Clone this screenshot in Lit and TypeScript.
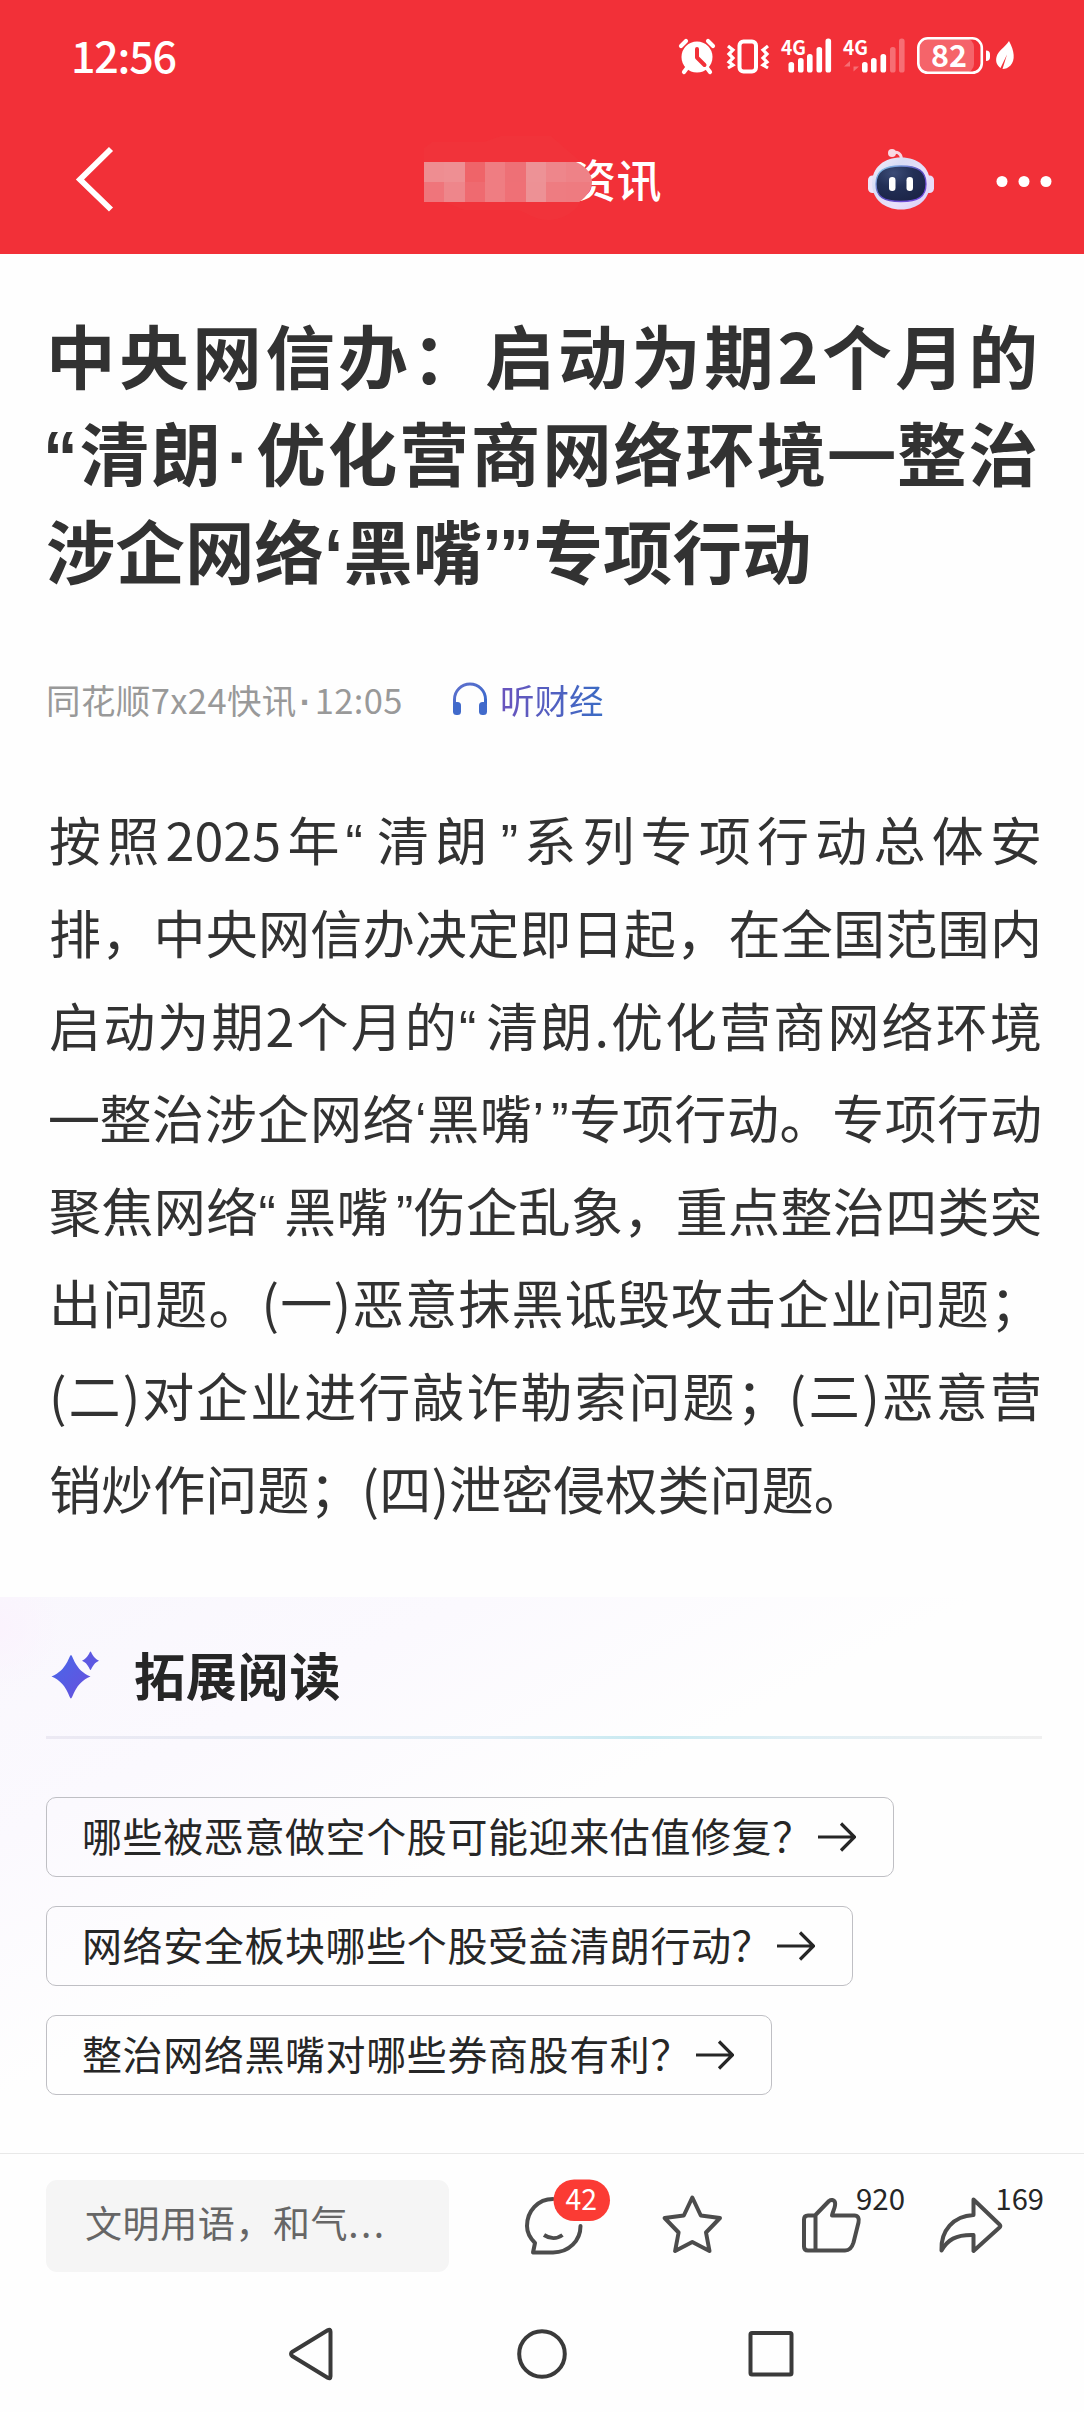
import { LitElement, html, css, svg } from "lit";
import { customElement } from "lit/decorators.js";
import { classMap } from "lit/directives/class-map.js";

const FONT = css`"Noto Sans CJK SC", "Noto Sans", sans-serif`;

@customElement("status-bar")
class StatusBar extends LitElement {
  static styles = css`
    :host { display: block; height: 110px; color: #fff; }
    .bar { display: flex; justify-content: space-between; height: 100%; padding: 0 64px 0 71px; box-sizing: border-box; }
    .time { font: 500 43px/112px "Noto Sans CJK SC", sans-serif; letter-spacing: -1.2px; margin-top: -2px; }
    .icons { width: 350px; height: 50px; margin-top: 30px; display: block; }
    .net { font: 700 20px "Noto Sans CJK SC", sans-serif; }
    .charge { font: 700 31px "Noto Sans CJK SC", sans-serif; }
  `;
  render() {
    const bars = (xs: number[], tops: number[], dim: number) =>
      xs.map((x, i) => svg`<rect x=${x} y=${tops[i]} width="5.6" height=${72.5 - tops[i]} rx="2.6" opacity=${i >= dim ? 0.3 : 1}></rect>`);
    return html`<div class="bar">
      <div class="time">12:56</div>
      <svg class="icons" viewBox="670 30 350 50" fill="#fff">
        <circle cx="697" cy="57" r="15.5"></circle>
        <g stroke="#fff" stroke-width="4.2" stroke-linecap="round" fill="none">
          <path d="M681 46l5-5M713 46l-5-5M687 68l-3 4M707 68l3 4"></path>
        </g>
        <path d="M697 49v8.5l7.5 7.5" fill="none" stroke="#f23038" stroke-width="4" stroke-linecap="round" stroke-linejoin="round"></path>
        <rect x="739.5" y="41.5" width="16.5" height="30" rx="4" fill="none" stroke="#fff" stroke-width="4"></rect>
        <path d="M728 46l5 4-4 4 4 4-4 4 4 3-5 3M768 46l-5 4 4 4-4 4 4 4-4 3 5 3" fill="none" stroke="#fff" stroke-width="3.2"></path>
        <text class="net" x="781" y="55" textLength="25" lengthAdjust="spacingAndGlyphs">4G</text>
        ${bars([788.5, 798, 807, 816.5, 825.5], [62, 58, 54, 47, 38.5], 5)}
        <text class="net" x="843" y="55" textLength="25" lengthAdjust="spacingAndGlyphs">4G</text>
        ${bars([862, 871, 880.5, 890, 899], [62, 58, 54, 47, 38.5], 3)}
        <path d="M850 71.500V61l-6 5.500h6M853.500 61v10.500l5.500-5h-5.500" fill="#fff" opacity=".3"></path>
        <rect x="918" y="38" width="56" height="35" rx="9" opacity=".25"></rect>
        <rect x="918.3" y="38.300" width="63.500" height="34.500" rx="9.500" fill="none" stroke="#fff" stroke-width="2.600"></rect>
        <path d="M986 50.500a4 4 0 0 1 4 4v2.500a4 4 0 0 1-4 4z"></path>
        <text class="charge" x="931" y="67" textLength="36" lengthAdjust="spacingAndGlyphs">82</text>
        <path d="M1009 41c5.500 10 6.500 19 1.500 24.500-2.500 2.500-5 3.500-8 3.500l4.500-14.500-6.500 13.500c-4-3-5-7-4-11 1.500-6.500 8.500-9.500 12.500-16z"></path>
      </svg>
    </div>`;
  }
}

@customElement("title-bar")
class TitleBar extends LitElement {
  static styles = css`
    :host { display: block; height: 144px; color: #fff; }
    .bar { display: grid; grid-template-columns: 424px 1fr 240px; height: 100%; }
    .back { width: 44px; height: 72px; margin: 33px 0 0 73px; }
    .mid { display: flex; height: 144px; }
    .mosaic { width: 170px; height: 144px; flex: none; position: relative; z-index: 1; }
    .name { font: 500 45px/68px "Noto Sans CJK SC", sans-serif; margin: 35px 0 0 -23px; white-space: nowrap; letter-spacing: 0.5px; }
    .actions { display: block; width: 240px; height: 80px; margin-top: 31px; }
  `;
  private cells = [
    ["#ee8d91", "#ee8f93", "#ef6469", "#ef7d82", "#ee7076", "#ed9296", "#ee868b", "#ee8287"],
    ["#ef757b", "#ee868b", "#ef6a70", "#ef7d82", "#ef7076", "#ed9195", "#ee7c81", "#ee7b80"],
  ];
  render() {
    return html`<div class="bar">
      <svg class="back" viewBox="73 143 44 72"><path d="M111 149L80 179.500L111 209.500" fill="none" stroke="#fff" stroke-width="5.800"></path></svg>
      <div class="mid">
        <svg class="mosaic" viewBox="0 0 170 144">
          <defs><clipPath id="m"><path d="M0 52h152c12 5 16 14 16 20s-4 14-13 20H0z"></path></clipPath></defs>
          <path d="M0 38l8-6h52l17-6h50l30 26H0zM20 92h136c-4 10-18 18-32 18s-22-8-30-10H40z" fill="#f1333a"></path>
          <g clip-path="url(#m)" shape-rendering="crispEdges">
            ${this.cells.map((row, y) => row.map((c, x) => svg`<rect x=${x * 20.3} y=${52 + y * 20} width=${x === 7 ? 30 : 20.5} height="20" fill=${c}></rect>`))}
          </g>
        </svg>
        <div class="name">资讯</div>
      </div>
      <svg class="actions" viewBox="844 141 240 80">
        <defs>
          <linearGradient id="shell" x1="0" y1="0" x2="1" y2="1"><stop offset="0" stop-color="#f6f0fc"></stop><stop offset=".3" stop-color="#d9dcf4"></stop><stop offset=".65" stop-color="#e9e0fb"></stop><stop offset="1" stop-color="#d5ccf5"></stop></linearGradient>
          <linearGradient id="rim" x1="0" y1="0" x2="1" y2="1"><stop offset="0" stop-color="#8fd7ef"></stop><stop offset=".5" stop-color="#5b4ec0"></stop><stop offset="1" stop-color="#7a48e6"></stop></linearGradient>
          <radialGradient id="face" cx=".35" cy=".2" r=".8"><stop offset="0" stop-color="#3c4c77"></stop><stop offset=".5" stop-color="#222f56"></stop><stop offset="1" stop-color="#1c2548"></stop></radialGradient>
        </defs>
        <path d="M892 153c5-2 9 0 9.500 6" fill="none" stroke="#f8d5e0" stroke-width="3"></path>
        <circle cx="892" cy="153" r="4" fill="#f9d9e3"></circle>
        <rect x="868" y="175.500" width="10" height="17.500" rx="4.500" fill="#eee4f8"></rect>
        <rect x="924" y="175.500" width="10" height="17.500" rx="4.500" fill="#e9dcf8"></rect>
        <path d="M901 157.500c17 0 29 10 29 25.500 0 16-12 26.500-29 26.500s-29-10.500-29-26.500c0-15.500 12-25.500 29-25.500z" fill="url(#shell)"></path>
        <path d="M901 166c17 0 25 5 25 18s-8 17.500-25 17.500-25-4.500-25-17.500 8-18 25-18z" fill="url(#face)" stroke="url(#rim)" stroke-width="1.300"></path>
        <rect x="889" y="177" width="6.500" height="14" rx="3.200" fill="#fff"></rect>
        <rect x="906.500" y="177" width="6.500" height="14" rx="3.200" fill="#fff"></rect>
        <g fill="#fff"><circle cx="1002" cy="181.500" r="5.500"></circle><circle cx="1024" cy="181.500" r="5.500"></circle><circle cx="1046" cy="181.500" r="5.500"></circle></g>
      </svg>
    </div>`;
  }
}

@customElement("news-article")
class NewsArticle extends LitElement {
  static styles = css`
    :host { display: block; height: 1343px; box-sizing: border-box; padding: 51px 0 0; font-family: ${FONT}; color: #323232; }
    .title { margin: 0; padding: 0 46px; font-size: 69.5px; line-height: 97.3px; font-weight: 700; }
    .line { display: block; white-space: nowrap; }
    .full { text-align: justify; text-align-last: justify; }
    .quote { font-family: "Liberation Sans", sans-serif; line-height: 1; }
    .dot { font-family: "Liberation Sans", sans-serif; font-weight: 700; line-height: 1; margin: 0 0.06em; }
    .dash { font-family: "Noto Sans", sans-serif; line-height: 1; position: relative; top: -0.1em; margin: 0 -0.02em; }
    .title .open { margin-left: -3px; }
    .title .close { margin-left: -0.04em; }
    .body .open { margin-right: 0.15em; }
    .body .close { margin-left: 0.14em; }
    .meta { display: flex; align-items: center; height: 50px; padding: 0 46px; margin-top: 77px; font-size: 34.5px; line-height: 50px; color: #999; }
    .source { width: 406px; letter-spacing: 0.4px; white-space: nowrap; }
    .source .dot { margin: 0 3px 0 3px; }
    .headset { width: 36px; height: 34px; margin-right: 12px; }
    .listen { background: linear-gradient(90deg, #6a53bd, #3a6cc4); -webkit-background-clip: text; background-clip: text; color: transparent; }
    .body { margin: 69.5px 0 0; padding: 0 42px 0 49px; font-size: 52px; line-height: 92.6px; letter-spacing: 0.1px; }
  `;
  private headline = ["中央网信办：启动为期2个月的", "“清朗·优化营商网络环境—整治", "涉企网络‘黑嘴’”专项行动"];
  private paragraph = [
    "按照2025年“清朗”系列专项行动总体安",
    "排，中央网信办决定即日起，在全国范围内",
    "启动为期2个月的“清朗.优化营商网络环境",
    "—整治涉企网络‘黑嘴’”专项行动。专项行动",
    "聚焦网络“黑嘴”伤企乱象，重点整治四类突",
    "出问题。(一)恶意抹黑诋毁攻击企业问题；",
    "(二)对企业进行敲诈勒索问题；(三)恶意营",
    "销炒作问题；(四)泄密侵权类问题。",
  ];
  private marks: Record<string, string> = { "“": "quote open", "”": "quote close", "‘": "quote", "’": "quote", "·": "dot", "—": "dash" };
  private rich(text: string) {
    return text.split(/([“”‘’·—])/).map((part) => (this.marks[part] ? html`<span class=${this.marks[part]}>${part}</span>` : part));
  }
  private lines(list: string[]) {
    return list.map((t, i) => html`<span class=${classMap({ line: true, full: i < list.length - 1 })}>${this.rich(t)}</span>`);
  }
  render() {
    return html`
      <h1 class="title">${this.lines(this.headline)}</h1>
      <div class="meta">
        <span class="source">${this.rich("同花顺7x24快讯·12:05")}</span>
        <svg class="headset" viewBox="0 0 36 34">
          <defs><linearGradient id="h" x1="0" x2="1" y1="0" y2="1"><stop offset="0" stop-color="#6070cc"></stop><stop offset="1" stop-color="#3668cc"></stop></linearGradient></defs>
          <path d="M2.500 23v-5.500a15.500 15.500 0 0 1 31 0V23" fill="none" stroke="url(#h)" stroke-width="3"></path>
          <rect x="1" y="20" width="8" height="13" rx="3.500" fill="#416acb"></rect>
          <rect x="27" y="20" width="8" height="13" rx="3.500" fill="#416acb"></rect>
        </svg>
        <span class="listen">听财经</span>
      </div>
      <p class="body">${this.lines(this.paragraph)}</p>`;
  }
}

@customElement("further-reading")
class FurtherReading extends LitElement {
  static styles = css`
    :host { display: block; height: 556px; font-family: ${FONT}; color: #262626;
      background: radial-gradient(circle at 0 30px, #fbf3fd 0, #fbf3fd00 60px), linear-gradient(153deg, #f9f7fd 0, #fbf9fe 22%, #fefefe 45%, #fefefe 100%); }
    .wrap { padding: 0 42px 0 46px; display: flex; flex-direction: column; align-items: flex-start; }
    .head { display: flex; align-items: center; height: 139px; padding-top: 0; }
    .spark { width: 50px; height: 50px; margin: 16px 34px 0 4px; }
    .label { font-size: 51px; font-weight: 700; line-height: 70px; margin-top: 14px; letter-spacing: 0.8px; }
    .rule { width: 100%; height: 2.500px; background: linear-gradient(90deg, #ece9f3, #dfecf5 45%, #c9eaf1 60%, #dfeef4 75%, #f0f0f0); }
    .chips { display: flex; flex-direction: column; align-items: flex-start; gap: 29px; margin-top: 58px; }
    .chip { display: flex; align-items: center; box-sizing: border-box; height: 80px; border: 1px solid #bfbfc4; border-radius: 10px; padding: 0 37px 0 35px; font-size: 40px; letter-spacing: 0.6px; white-space: nowrap; }
    .ask { line-height: 60px; margin-top: -4px; }
    .arrow { width: 38px; height: 30px; margin-left: 5px; }
  `;
  private asks = ["哪些被恶意做空个股可能迎来估值修复？", "网络安全板块哪些个股受益清朗行动？", "整治网络黑嘴对哪些券商股有利？"];
  render() {
    return html`<div class="wrap">
      <div class="head">
        <svg class="spark" viewBox="50 1653 50 50">
          <defs><linearGradient id="s" x1="0" x2="1" y1="0" y2="1"><stop offset="0" stop-color="#4668ea"></stop><stop offset="1" stop-color="#6a4fdc"></stop></linearGradient></defs>
          <path d="M71 1658c2 0 3.500 15 19.500 21.500-16 6.500-17.500 22-19.500 22s-3.500-15.500-19.500-22C67.500 1673 69 1658 71 1658z" fill="url(#s)"></path>
          <path d="M90.500 1654.500c1 0 2 6.500 8.500 9.200-6.500 2.700-7.500 9.300-8.500 9.300s-2-6.600-8.500-9.300c6.500-2.700 7.500-9.200 8.500-9.200z" fill="#5d58e2"></path>
        </svg>
        <div class="label">拓展阅读</div>
      </div>
      <div class="rule"></div>
      <div class="chips">
        ${this.asks.map((a) => html`<div class="chip"><span class="ask">${a}</span>
          <svg class="arrow" viewBox="0 0 38 30"><path d="M0 15h36M23 1.500l13.500 13.500-13.500 13.500" fill="none" stroke="#262626" stroke-width="3.200"></path></svg></div>`)}
      </div>
    </div>`;
  }
}

@customElement("comment-bar")
class CommentBar extends LitElement {
  static styles = css`
    :host { display: block; height: 142px; box-sizing: border-box; border-top: 1px solid #e8e8e8; background: #fefefe; font-family: ${FONT}; }
    .bar { display: flex; padding-left: 46px; }
    .input { width: 403px; height: 92px; margin-top: 26px; border-radius: 11px; background: #f5f5f5; color: #666; font-size: 37px; line-height: 85px; box-sizing: border-box; padding-left: 39px; letter-spacing: 0.6px; flex: none; }
    .dots { letter-spacing: 2.500px; }
    .icons { width: 584px; height: 120px; margin-left: 51px; flex: none; }
    .count { font: 400 29px "Noto Sans CJK SC", sans-serif; fill: #262626; }
    .badge { font: 400 29px "Noto Sans CJK SC", sans-serif; fill: #fff; }
  `;
  render() {
    return html`<div class="bar">
      <div class="input">文明用语，和气<span class="dots">...</span></div>
      <svg class="icons" viewBox="500 2155 584 120">
        <g fill="none" stroke="#4c4c4c" stroke-width="4" stroke-linejoin="round" stroke-linecap="round">
          <path d="M553 2200c-15 0-26 12-26 27 0 7 3 12 8 17l-2 9.500h20c16 0 27.500-12 27.500-26.500"></path>
          <path d="M544 2236c6 4 13 4 18.500 0" stroke-linecap="butt"></path>
          <path d="M692.300 2198.500l8.500 18 19.200 2.500-14 14.500 3.500 18.500-17.200-9-17.200 9 3.500-18.500-14-14.500 19.200-2.500z"></path>
          <path d="M815 2216.500h-7q-4 0-4 4v27q0 4 4 4h37c5 0 7-3 8.500-8l5-20c1-4-.5-7-4-7h-22.500c1-5 4-9 3-13-1-3-4-3-6-1.500zM815.500 2217v33" ></path>
          <path d="M973.500 2200.500l26 25q1.500 1.500 0 3l-26 23.500v-16c-18-.5-26 5-32 15.500-1-20 12-34.500 32-35.500z"></path>
        </g>
        <rect x="553.500" y="2180.500" width="56.500" height="41.500" rx="20.700" fill="#fb3b34"></rect>
        <text class="badge" x="565.500" y="2210.500" textLength="31.500" lengthAdjust="spacingAndGlyphs">42</text>
        <text class="count" x="856" y="2210.500" textLength="49" lengthAdjust="spacingAndGlyphs">920</text>
        <text class="count" x="995.500" y="2210.500" textLength="48.500" lengthAdjust="spacingAndGlyphs">169</text>
      </svg>
    </div>`;
  }
}

@customElement("system-nav")
class SystemNav extends LitElement {
  static styles = css`
    :host { display: block; height: 117px; background: #fefefe; }
    .keys { display: flex; justify-content: center; align-items: center; gap: 174px; height: 117px; }
    .key { width: 56px; height: 56px; }
  `;
  render() {
    const key = (shape: unknown) => html`<svg class="key" viewBox="0 0 56 56" fill="none" stroke="#3a3a3a" stroke-width="4" stroke-linejoin="round">${shape}</svg>`;
    return html`<div class="keys">
      ${key(svg`<path d="M46.500 5.700v44.600q0 3-2.800 1.500L8.500 30.300q-3-2.300 0-4.600L43.700 4.200q2.800-1.500 2.800 1.500z"></path>`)}
      ${key(svg`<circle cx="28" cy="28" r="22.800"></circle>`)}
      ${key(svg`<rect x="6.500" y="7" width="41" height="41.500" rx="1.500"></rect>`)}
    </div>`;
  }
}

@customElement("app-root")
class AppRoot extends LitElement {
  static styles = css`
    :host { display: block; width: 1084px; height: 2412px; overflow: hidden; background: #fefefe; }
    .top { background: #f23038; height: 254px; }
  `;
  render() {
    return html`
      <header class="top"><status-bar></status-bar><title-bar></title-bar></header>
      <news-article></news-article>
      <further-reading></further-reading>
      <comment-bar></comment-bar>
      <system-nav></system-nav>`;
  }
}
